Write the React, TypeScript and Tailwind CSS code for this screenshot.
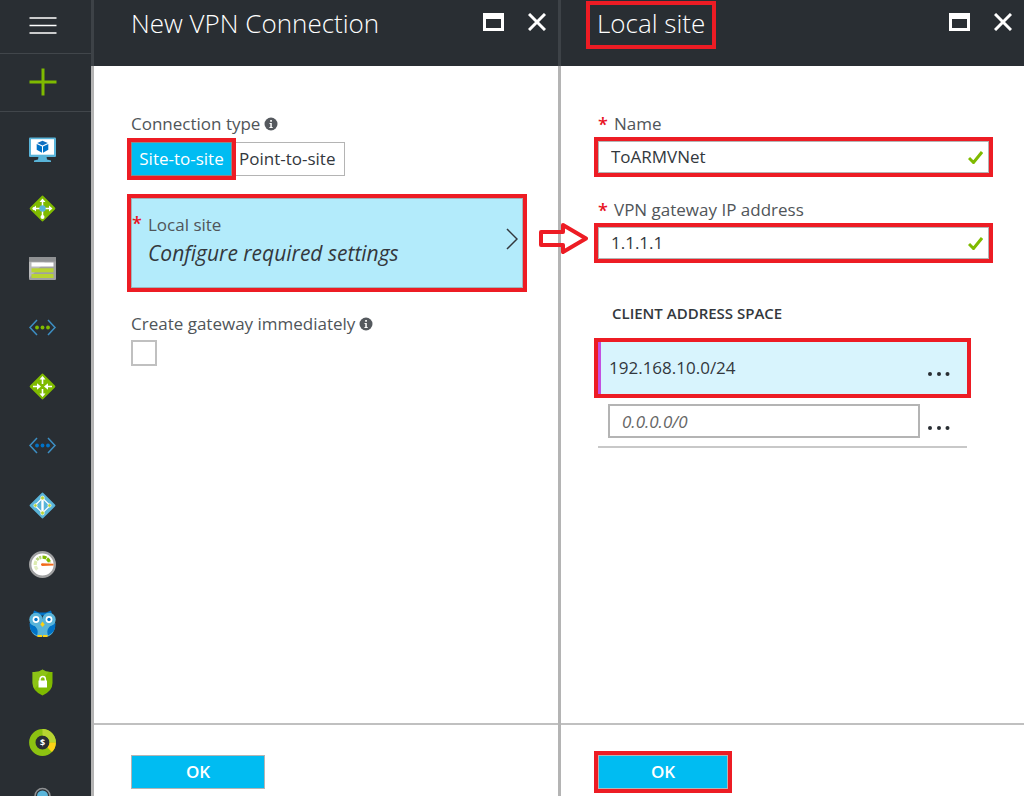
import type { ReactNode } from "react";

interface NavEntry {
  label: string;
  icon: ReactNode;
}

const NAV: NavEntry[] = [
  {
    label: "Virtual machines",
    icon: (
      <>
        <rect x="0" y="1.5" width="27" height="19.5" rx="1" fill="#59b4d9" />
        <rect x="2" y="3.2" width="23" height="15.5" fill="#fff" />
        <path d="M9.5 20.5h8l.5 3 4 1v1.5h-17v-1.500l4-1z" fill="#59b4d9" />
        <path d="M13.500 4.800l5.300 2.300-5.300 2.300-5.300-2.300z" fill="#0f6fc0" />
        <path d="M7.700 8l5.300 2.400v6.400l-5.300-3z" fill="#0072c6" />
        <path d="M19.300 8l-5.300 2.400v6.400l5.300-3z" fill="#0072c6" />
      </>
    ),
  },
  {
    label: "Virtual network gateways",
    icon: (
      <>
        <rect x="4" y="4" width="19" height="19" rx="1.5" fill="#7fba00" transform="rotate(45 13.5 13.5)" />
        <path d="M13.5 5v17M5 13.5h17" stroke="#fff" strokeWidth="1.5" />
        <path d="M10.5 7l3-3.500 3 3.500zM20 10.500l3.500 3-3.500 3z" fill="#fff" />
        <path d="M7 10.500l-3.500 3 3.500 3z" fill="#fff" />
        <circle cx="13.5" cy="22" r="2" fill="#fff" />
        <circle cx="5" cy="13.5" r="1.5" fill="#fff" />
        <circle cx="13.5" cy="13.5" r="3.2" fill="#59b4d9" />
      </>
    ),
  },
  {
    label: "Resource groups",
    icon: (
      <>
        <rect x="0" y="2" width="27" height="23" rx="1" fill="#a0a1a2" />
        <path d="M0 7h16L0 23z" fill="#b8b9ba" />
        <path d="M0 3q0-1 1-1h25q1 0 1 1v3.500H0z" fill="#8f9193" />
        <rect x="2.5" y="7.5" width="22" height="4" fill="#fff" />
        <rect x="2.5" y="13.3" width="22" height="4" fill="#b8d432" />
        <rect x="2.5" y="19" width="22" height="4" fill="#b8d432" />
      </>
    ),
  },
  {
    label: "Virtual networks",
    icon: (
      <>
        <path d="M8 6l-7 7.500 7 7.500M19 6l7 7.500-7 7.500" fill="none" stroke="#3d8fc4" strokeWidth="1.5" />
        <g fill="#7fba00">
          <circle cx="8" cy="13.5" r="1.9" />
          <circle cx="13.5" cy="13.5" r="1.9" />
          <circle cx="19" cy="13.5" r="1.9" />
        </g>
      </>
    ),
  },
  {
    label: "Load balancers",
    icon: (
      <>
        <rect x="4" y="4" width="19" height="19" rx="1.5" fill="#7fba00" transform="rotate(45 13.5 13.5)" />
        <path d="M13.5 5v6M13.5 16v6M4 13.500h5M18 13.500h5" stroke="#fff" strokeWidth="1.6" />
        <path d="M10.5 6.500l3-3.500 3 3.500zM10.500 20.500l3 3.500 3-3.500zM8 10.300l4 3.200-4 3.200zM19 10.300l-4 3.200 4 3.200z" fill="#fff" />
      </>
    ),
  },
  {
    label: "Virtual networks (classic)",
    icon: (
      <>
        <path d="M8 6l-7 7.500 7 7.500M19 6l7 7.500-7 7.500" fill="none" stroke="#3d8fc4" strokeWidth="1.5" />
        <g fill="#0072c6">
          <circle cx="8" cy="13.5" r="1.9" />
          <circle cx="13.5" cy="13.5" r="1.9" />
          <circle cx="19" cy="13.5" r="1.9" />
        </g>
      </>
    ),
  },
  {
    label: "Active Directory",
    icon: (
      <>
        <rect x="4" y="4" width="19" height="19" rx="1.5" fill="#59b4d9" transform="rotate(45 13.5 13.5)" />
        <path d="M13.5 6l-7.500 7.500 7.500 7.500 7.500-7.500z" fill="none" stroke="#fff" strokeWidth="1.2" />
        <path d="M13.5 6v15" stroke="#fff" strokeWidth="2.4" />
        <g fill="#b8d432" stroke="#fff" strokeWidth="0.6">
          <circle cx="13.5" cy="6" r="1.9" />
          <circle cx="13.5" cy="21" r="1.9" />
          <circle cx="6.5" cy="13.5" r="1.7" />
          <circle cx="20.5" cy="13.5" r="1.7" />
        </g>
      </>
    ),
  },
  {
    label: "Monitor",
    icon: (
      <>
        <circle cx="13.5" cy="13.5" r="12.3" fill="#fff" stroke="#a0a1a2" strokeWidth="2.4" />
        <g fill="none" strokeWidth="3.2">
          <path d="M8.300 18.700a7.300 7.300 0 0 1-1.900-3.500" stroke="#e3efc4" />
          <path d="M6.200 14a7.300 7.300 0 0 1 .9-4" stroke="#dcebb0" />
          <path d="M7.700 9a7.300 7.300 0 0 1 4.600-2.700" stroke="#b8d47a" strokeDasharray="2.6 0.600" />
          <path d="M13.500 6.200a7.300 7.300 0 0 1 7.200 5.600" stroke="#7fba00" strokeDasharray="4 0.700" />
        </g>
        <path d="M13 12.200l11.500.600v1.800l-11.500.300a1.400 1.400 0 0 1 0-2.700z" fill="#f26b1d" />
      </>
    ),
  },
  {
    label: "Advisor",
    icon: (
      <>
        <path d="M5 .5l5 2h7l5-2 1.500 5H3.500z" fill="#0072c6" />
        <path d="M1 9h25v8q-1 7-7 9.500H8Q2 24 1 17z" fill="#59b4d9" />
        <path d="M.5 13q-.5 9 7.500 12.500Q11 17 .5 13zM26.500 13q.5 9-7.500 12.500Q16 17 26.500 13z" fill="#0072c6" />
        <circle cx="7" cy="9.500" r="6.700" fill="#59b4d9" />
        <circle cx="20" cy="9.500" r="6.700" fill="#59b4d9" />
        <circle cx="7" cy="9.500" r="3.400" fill="#fff" />
        <circle cx="20" cy="9.500" r="3.400" fill="#fff" />
        <circle cx="7" cy="9.500" r="1.700" fill="#0072c6" />
        <circle cx="20" cy="9.500" r="1.700" fill="#0072c6" />
        <path d="M13.500 11.500l2.200 3-2.200 2.500-2.200-2.500zM8.500 25h4.500v2h-4.500zM14 25h4.500v2h-4.500z" fill="#fcd116" />
      </>
    ),
  },
  {
    label: "Security Center",
    icon: (
      <>
        <path d="M13.500.5q4 3 10 2.500v11q0 8-10 12.500Q3.500 22 3.500 14V3q6 .5 10-2.500z" fill="#7fba00" />
        <path d="M13.500.5q-4 3-10 2.500v11q0 3 2 6L20 2.800q-4-.5-6.500-2.300z" fill="#9ccc2c" opacity="0.5" />
        <rect x="9.500" y="11.500" width="8.500" height="7" fill="#fff" />
        <path d="M11 12v-1.700a2.700 2.700 0 0 1 5.400 0v1.700" fill="none" stroke="#fff" strokeWidth="1.5" />
      </>
    ),
  },
  {
    label: "Cost management",
    icon: (
      <>
        <circle cx="13.5" cy="13.5" r="10.200" fill="none" stroke="#8cc211" strokeWidth="6.400" />
        <path d="M13.500 3.300a10.200 10.200 0 0 1 10.200 10.200" fill="none" stroke="#b8d432" strokeWidth="6.400" />
        <path d="M23.700 13.500a10.200 10.200 0 0 1-3 7.200" fill="none" stroke="#fcd116" strokeWidth="6.400" />
        <text x="13.500" y="17" textAnchor="middle" fontSize="9" fontWeight="700" fill="#fff">$</text>
      </>
    ),
  },
  {
    label: "More services",
    icon: (
      <>
        <circle cx="13.500" cy="8" r="7.500" fill="none" stroke="#8f9193" strokeWidth="1.500" />
        <circle cx="13.500" cy="8" r="5.500" fill="#59b4d9" />
      </>
    ),
  },
];

function Sidebar() {
  return (
    <nav className="flex w-[91px] shrink-0 flex-col overflow-hidden bg-[#292e33]">
      <button type="button" aria-label="Menu" className="flex h-[54px] shrink-0 items-center justify-center border-b border-[#41464b] pr-[5px] pb-[2px]">
        <svg width="28" height="17" stroke="#fff" strokeWidth="1.5">
          <path d="M.5 1h27M.5 8.500h27M.5 16h27" />
        </svg>
      </button>
      <button type="button" aria-label="New" className="flex h-[58px] shrink-0 items-center justify-center border-b border-[#41464b] pr-[5px] pb-[2px]">
        <svg width="28" height="28" stroke="#7fba00" strokeWidth="3">
          <path d="M.5 14h27M14 .5v27" />
        </svg>
      </button>
      <ul className="mt-2 flex h-[711px] shrink-0 flex-col">
        {NAV.map((entry) => (
          <li key={entry.label} className="flex flex-1 items-center justify-center pr-[6px]">
            <button type="button" aria-label={entry.label}>
              <svg width="27" height="27" viewBox="0 0 27 27" className="block overflow-visible">
                {entry.icon}
              </svg>
            </button>
          </li>
        ))}
      </ul>
    </nav>
  );
}

interface BladeProps {
  title: string;
  highlight?: boolean;
  footer: ReactNode;
  children: ReactNode;
}

function Blade({ title, highlight, footer, children }: BladeProps) {
  return (
    <section className="flex min-w-0 flex-col">
      <header className="flex h-[66px] shrink-0 justify-between border-l-[3px] border-[#3d4247] bg-[#292e33] pr-3 text-white">
        <h1
          className={
            highlight
              ? "mt-[5px] ml-[29px] h-10 px-[7px] text-[26px] leading-9 font-light ring-4 ring-[#ed1c24]"
              : "mt-[5px] ml-[37px] h-10 text-[26px] leading-9 font-light"
          }
        >
          {title}
        </h1>
        <div className="mt-3 flex h-5 items-center gap-6">
          <button type="button" aria-label={`Maximize ${title}`}>
            <svg width="21" height="18" className="block">
              <path d="M0 0h21v18H0zM3 6v9h15V6z" fill="#fff" fillRule="evenodd" />
            </svg>
          </button>
          <button type="button" aria-label={`Close ${title}`}>
            <svg width="18" height="18" stroke="#fff" strokeWidth="3" className="block">
              <path d="M1 1l16 16M17 1L1 17" />
            </svg>
          </button>
        </div>
      </header>
      <div className="flex flex-1 flex-col border-l-[3px] border-[#b4b4b4] bg-white">
        <div className="flex-1 pt-[46px] pr-[35px] pl-[37px]">{children}</div>
        <footer className="h-[73px] border-t-2 border-[#c0c0c0] pt-[30px] pl-[37px]">{footer}</footer>
      </div>
    </section>
  );
}

function InfoIcon() {
  return (
    <svg width="14" height="14" viewBox="0 0 14 14">
      <circle cx="7" cy="7" r="6.500" fill="#55595e" />
      <path d="M5.500 6h2.300v4h.9v1H5.400v-1h.9V7h-.8zM6.200 3h1.700v1.700H6.200z" fill="#fff" />
    </svg>
  );
}

function Required() {
  return <span className="w-4 shrink-0 text-[18px] leading-6 font-semibold text-[#e81123]">*</span>;
}

function TextField({ id, label, value }: { id: string; label: string; value: string }) {
  return (
    <div className="mb-[25px]">
      <label htmlFor={id} className="flex h-6 text-[17px] leading-6">
        <Required />
        {label}
      </label>
      <div className="mt-[5px] flex h-8 items-center border border-[#b4b4b4] pr-[5px] ring-4 ring-[#ed1c24]">
        <input id={id} defaultValue={value} className="min-w-0 flex-1 pl-3 text-[17px] text-[#33383d] outline-none" />
        <svg width="15" height="13" fill="none" stroke="#7fba00" strokeWidth="3">
          <path d="M1 7l4.500 4.500L14 1" />
        </svg>
      </div>
    </div>
  );
}

function MoreButton({ label }: { label: string }) {
  return (
    <button type="button" aria-label={label} className="flex h-5 items-center">
      <svg width="22" height="4" fill="#292e33">
        <circle cx="2" cy="2" r="2" />
        <circle cx="11" cy="2" r="2" />
        <circle cx="19.500" cy="2" r="2" />
      </svg>
    </button>
  );
}

function VpnConnectionBlade() {
  return (
    <Blade
      title="New VPN Connection"
      footer={
        <button type="button" className="h-[34px] w-[134px] border border-[#b4b4b4] bg-[#00bcf2] text-[17px] font-semibold text-white">
          OK
        </button>
      }
    >
      <div className="flex h-6 items-center gap-1 text-[17px]">
        Connection type <InfoIcon />
      </div>
      <div className="mt-[6px] flex h-[34px] text-[17px]">
        <button type="button" className="z-10 w-[101px] border border-[#8a8a8a] bg-[#00bcf2] whitespace-nowrap text-white ring-4 ring-[#ed1c24]">
          Site-to-site
        </button>
        <button type="button" className="w-[113px] border border-l-0 border-[#b4b4b4] pl-[7px] text-left whitespace-nowrap text-[#33383d]">
          Point-to-site
        </button>
      </div>
      <button type="button" className="mt-[22px] flex h-[90px] w-full items-center justify-between border border-[#a0b4ba] bg-[#b3ebfb] pr-1 pb-2 text-left ring-4 ring-[#ed1c24]">
        <span className="flex">
          <Required />
          <span className="flex flex-col">
            <span className="text-[17px] leading-7">Local site</span>
            <span className="text-[21px] leading-7 text-[#33383d] italic">Configure required settings</span>
          </span>
        </span>
        <svg width="12" height="22" fill="none" stroke="#33383d" strokeWidth="1.5">
          <path d="M1 1l10 10L1 21" />
        </svg>
      </button>
      <label htmlFor="create-gateway" className="mt-6 flex h-6 items-center gap-1 text-[17px]">
        Create gateway immediately <InfoIcon />
      </label>
      <input id="create-gateway" type="checkbox" className="mt-1 block size-[26px] appearance-none border-2 border-[#c0c0c0] bg-white" />
    </Blade>
  );
}

function LocalSiteBlade() {
  return (
    <Blade
      title="Local site"
      highlight
      footer={
        <button type="button" className="h-[34px] w-[130px] border border-[#b4b4b4] bg-[#00bcf2] text-[17px] font-semibold text-white ring-4 ring-[#ed1c24]">
          OK
        </button>
      }
    >
      <TextField id="site-name" label="Name" value="ToARMVNet" />
      <TextField id="gateway-ip" label="VPN gateway IP address" value="1.1.1.1" />
      <div className="mt-[42px] mr-[22px]">
        <h2 className="pl-[14px] text-[15px] leading-6 font-semibold text-[#33383d]">CLIENT ADDRESS SPACE</h2>
        <div className="mt-[17px] flex h-[52px] items-center justify-between border-l-[3px] border-[#c34fe0] bg-[#d8f4fd] pr-[17px] pl-2 text-[17px] text-[#33383d] ring-4 ring-[#ed1c24]">
          192.168.10.0/24
          <span className="pt-3">
            <MoreButton label="Options for 192.168.10.0/24" />
          </span>
        </div>
        <div className="mt-[10px] flex h-11 items-start justify-between border-b-2 border-[#c8c8c8] pr-[17px] pl-[10px]">
          <input
            aria-label="Address space"
            placeholder="0.0.0.0/0"
            className="mr-2 h-[34px] min-w-0 flex-1 border-2 border-[#b4b4b4] px-3 text-[17px] italic placeholder:text-[#666]"
          />
          <span className="pt-[14px]">
            <MoreButton label="Options for new address" />
          </span>
        </div>
      </div>
    </Blade>
  );
}

export default function App() {
  return (
    <div className="flex h-screen overflow-hidden bg-white font-['Open_Sans','Noto_Sans',sans-serif] text-[#505559]">
      <Sidebar />
      <main className="relative grid min-w-0 flex-1 grid-cols-[467fr_466fr]">
        <VpnConnectionBlade />
        <LocalSiteBlade />
        {/* callout arrow from the Local site tile to its blade */}
        <svg width="52" height="32" className="absolute top-[222px] left-1/2 -ml-5" fill="none" stroke="#ed1c24" strokeWidth="4" strokeLinejoin="round">
          <path d="M3 10h22V3l23 13.500L25 30v-7H3z" />
        </svg>
      </main>
    </div>
  );
}
